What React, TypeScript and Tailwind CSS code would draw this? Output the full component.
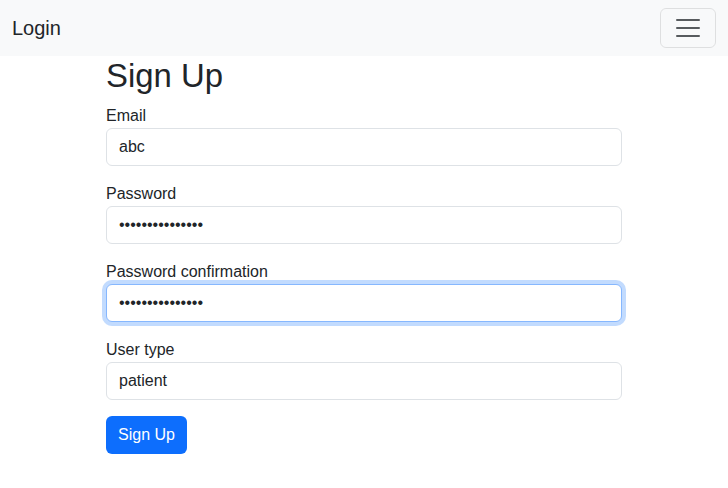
import React from 'react';

const fields = [
  { label: 'Email', type: 'text', value: 'abc' },
  { label: 'Password', type: 'password', value: 'abcdefghijklmno' },
  { label: 'Password confirmation', type: 'password', value: 'abcdefghijklmno', focused: true },
  { label: 'User type', type: 'text', value: 'patient' },
];

const App: React.FC = () => {
  return (
    <div className="min-h-[488px] bg-white text-[#212529] font-['Liberation_Sans',sans-serif]">
      {/* Navbar */}
      <nav className="bg-[#f8f9fa] py-2">
        <div className="flex items-center justify-between px-3">
          <a className="py-[5px] text-[20px] leading-[30px]">Login</a>
          <button className="flex h-10 w-14 items-center justify-center rounded-md border border-black/10">
            <svg width="30" height="30" viewBox="0 0 30 30">
              <path
                d="M4 7h22M4 15h22M4 23h22"
                stroke="rgba(33,37,41,0.75)"
                strokeWidth="2"
                strokeLinecap="round"
              />
            </svg>
          </button>
        </div>
      </nav>

      {/* Form */}
      <div className="mx-auto w-[540px] px-3">
        <h1 className="mb-[9px] text-[32.9px] font-medium leading-[1.2]">Sign Up</h1>
        <form>
          {fields.map(f => (
            <div key={f.label} className="mb-4">
              <label className="block text-base leading-6">{f.label}</label>
              <input
                type={f.type}
                defaultValue={f.value}
                readOnly
                className={`block h-[38px] w-full rounded-md border bg-white px-3 py-1.5 text-base leading-6 text-[#212529] outline-none ${
                  f.focused
                    ? 'border-[#86b7fe] shadow-[0_0_0_4px_rgba(13,110,253,0.25)]'
                    : 'border-[#dee2e6]'
                }`}
              />
            </div>
          ))}
          <button
            type="button"
            className="h-[38px] rounded-md bg-[#0d6efd] px-3 py-1.5 text-base leading-6 text-white"
          >
            Sign Up
          </button>
        </form>
      </div>
    </div>
  );
};

export default App;
